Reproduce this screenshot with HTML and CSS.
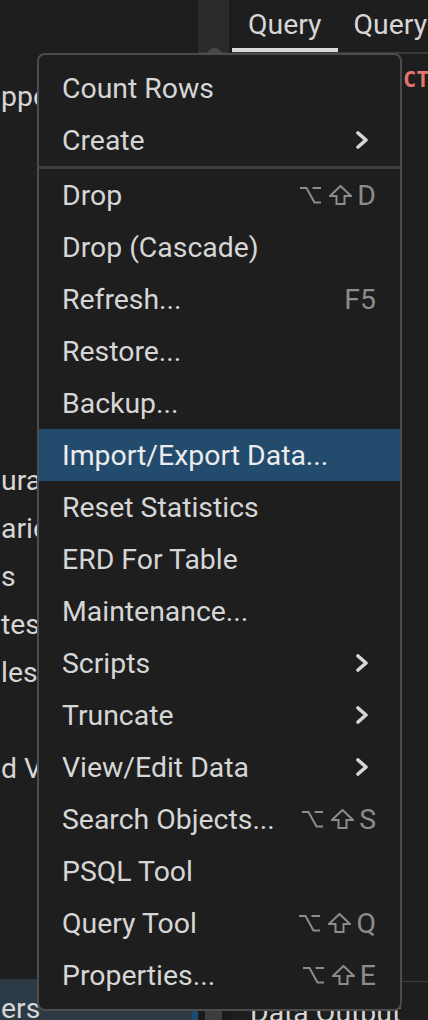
FILE: index.html
```html
<!DOCTYPE html>
<html>
<head>
<meta charset="utf-8">
<link rel="stylesheet" href="styles.css">
</head>
<body>
<div class="app">
  <div class="tree">
    <div class="tree-row"><span class="lbl">ppers</span></div>
    <div class="tree-row"></div>
    <div class="tree-row"></div>
    <div class="tree-row"></div>
    <div class="tree-row"></div>
    <div class="tree-row"></div>
    <div class="tree-row"></div>
    <div class="tree-row"></div>
    <div class="tree-row"><span class="lbl">urations</span></div>
    <div class="tree-row"><span class="lbl">aries</span></div>
    <div class="tree-row"><span class="lbl">s</span></div>
    <div class="tree-row"><span class="lbl">tes</span></div>
    <div class="tree-row"><span class="lbl">les</span></div>
    <div class="tree-row"></div>
    <div class="tree-row"><span class="lbl">d Views</span></div>
    <div class="tree-row"></div>
    <div class="tree-row"></div>
    <div class="tree-row"></div>
    <div class="tree-row"></div>
    <div class="tree-row selected"><span class="lbl">ers</span></div>
  </div>
  <div class="vscroll"><div class="thumb"></div><div class="thumb2"></div></div>
  <div class="main">
    <div class="tabs">
      <div class="tab active">Query</div>
      <div class="tab">Query History</div>
    </div>
    <div class="editor">
      <div class="code"><span class="kw">SELECT</span> * FROM</div>
    </div>
    <div class="output">
      <div class="out-tab">Data Output</div>
    </div>
  </div>
</div>

<div class="menu">
  <div class="item"><span class="label">Count Rows</span></div>
  <div class="item"><span class="label">Create</span><svg class="chev" width="12" height="18" viewBox="0 0 12 18"><polyline points="2,2 10,9 2,16"/></svg></div>
  <div class="sep"></div>
  <div class="item"><span class="label">Drop</span><span class="sc"><svg class="opt" width="21" height="18" viewBox="0 0 21 18"><path d="M0 2H6.5L14.5 16.5H21M12.5 2H21"/></svg><svg class="shift" width="23" height="20" viewBox="0 0 23 20"><path d="M11.5 1L22 11H15.5V19H7.5V11H1Z"/></svg><span class="key">D</span></span></div>
  <div class="item"><span class="label">Drop (Cascade)</span></div>
  <div class="item"><span class="label">Refresh...</span><span class="sc"><span class="key">F5</span></span></div>
  <div class="item"><span class="label">Restore...</span></div>
  <div class="item"><span class="label">Backup...</span></div>
  <div class="item hl"><span class="label">Import/Export Data...</span></div>
  <div class="item"><span class="label">Reset Statistics</span></div>
  <div class="item"><span class="label">ERD For Table</span></div>
  <div class="item"><span class="label">Maintenance...</span></div>
  <div class="item"><span class="label">Scripts</span><svg class="chev" width="12" height="18" viewBox="0 0 12 18"><polyline points="2,2 10,9 2,16"/></svg></div>
  <div class="item"><span class="label">Truncate</span><svg class="chev" width="12" height="18" viewBox="0 0 12 18"><polyline points="2,2 10,9 2,16"/></svg></div>
  <div class="item"><span class="label">View/Edit Data</span><svg class="chev" width="12" height="18" viewBox="0 0 12 18"><polyline points="2,2 10,9 2,16"/></svg></div>
  <div class="item"><span class="label">Search Objects...</span><span class="sc"><svg class="opt" width="21" height="18" viewBox="0 0 21 18"><path d="M0 2H6.5L14.5 16.5H21M12.5 2H21"/></svg><svg class="shift" width="23" height="20" viewBox="0 0 23 20"><path d="M11.5 1L22 11H15.5V19H7.5V11H1Z"/></svg><span class="key">S</span></span></div>
  <div class="item"><span class="label">PSQL Tool</span></div>
  <div class="item"><span class="label">Query Tool</span><span class="sc"><svg class="opt" width="21" height="18" viewBox="0 0 21 18"><path d="M0 2H6.5L14.5 16.5H21M12.5 2H21"/></svg><svg class="shift" width="23" height="20" viewBox="0 0 23 20"><path d="M11.5 1L22 11H15.5V19H7.5V11H1Z"/></svg><span class="key">Q</span></span></div>
  <div class="item"><span class="label">Properties...</span><span class="sc"><svg class="opt" width="21" height="18" viewBox="0 0 21 18"><path d="M0 2H6.5L14.5 16.5H21M12.5 2H21"/></svg><svg class="shift" width="23" height="20" viewBox="0 0 23 20"><path d="M11.5 1L22 11H15.5V19H7.5V11H1Z"/></svg><span class="key">E</span></span></div>
</div>
</body>
</html>
```

FILE: styles.css
```css
html, body {
  margin: 0;
  padding: 0;
  background: #1e1e1e;
}
body {
  width: 428px;
  height: 1020px;
  overflow: hidden;
  position: relative;
  font-family: Roboto, "Liberation Sans", sans-serif;
  font-size: 28.4px;
  color: #d6d6d6;
}
.app {
  display: grid;
  grid-template-columns: 198px 34px 196px;
  height: 1020px;
}
.tree {
  display: flex;
  flex-direction: column;
  padding-top: 72px;
  overflow: hidden;
}
.tree-row {
  height: 48px;
  flex: none;
  display: flex;
  align-items: center;
  white-space: nowrap;
}
.tree-row .lbl {
  padding-left: 1px;
}
.tree-row.selected {
  height: 58px;
  margin-top: -5px;
  background: #2b3a44;
  border-right: 6px solid #1f4a6e;
}
.vscroll {
  background: #1a1a1a;
  display: flex;
  flex-direction: column;
}
.vscroll::before {
  content: "";
  display: block;
  height: 52px;
  margin-right: 3px;
  background: #2a2a2a;
  border-bottom: 2px solid #3a3a3a;
}
.thumb {
  margin: -6px 10px 0 9px;
  height: 60px;
  background: #4a4a4a;
  border-radius: 8px;
}
.thumb2 {
  margin: auto 10px 0 7px;
  height: 40px;
  background: #3d3d3d;
}
.main {
  display: flex;
  flex-direction: column;
  overflow: hidden;
}
.tabs {
  height: 52px;
  display: flex;
  border-bottom: 2px solid #3a3a3a;
  white-space: nowrap;
  flex: none;
}
.tab {
  padding: 0 16px;
  display: flex;
  align-items: center;
  height: 48px;
}
.tab.active {
  border-bottom: 4px solid #d9d9d9;
}
.editor {
  flex: 1;
  padding-top: 13px;
}
.code {
  font-family: "DejaVu Sans Mono", monospace;
  font-size: 22px;
  white-space: nowrap;
  padding-left: 118px;
  font-weight: bold;
}
.kw {
  color: #e3746c;
}
.output {
  height: 38px;
  border-top: 1px solid #3a3a3a;
  flex: none;
}
.out-tab {
  padding: 14px 0 0 18px;
  white-space: nowrap;
}

.menu {
  position: absolute;
  left: 37px;
  top: 53px;
  width: 361px;
  padding: 7px 0 8px;
  background: #1e1e1e;
  border: 2px solid #4c4c4c;
  border-radius: 8px;
}
.item {
  height: 52px;
  display: flex;
  align-items: center;
  padding: 0 24px 0 23px;
  white-space: nowrap;
}
.item .label {
  flex: 1;
}
.item.hl {
  background: #224b6e;
  color: #ececec;
}
.sep {
  height: 3px;
  background: #3e3e3e;
}
.chev {
  margin-right: 8px;
  fill: none;
  stroke: #d6d6d6;
  stroke-width: 3.6;
  stroke-linecap: round;
  stroke-linejoin: round;
}
.sc {
  display: flex;
  align-items: center;
  color: #8c8c8c;
}
.sc svg {
  fill: none;
  stroke: #8c8c8c;
  stroke-width: 2;
  stroke-linejoin: miter;
}
.opt {
  margin-right: 8px;
}
.shift {
  margin-right: 5px;
}
```
